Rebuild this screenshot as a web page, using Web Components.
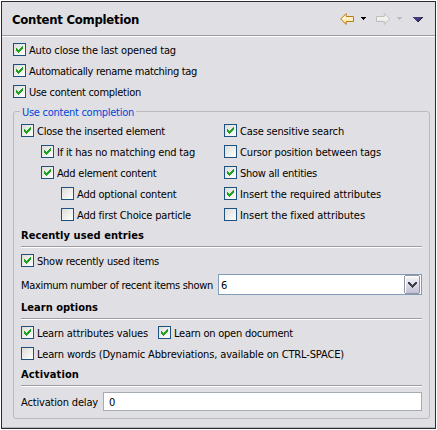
<!DOCTYPE html>
<html lang="en"><head><meta charset="utf-8"><title>Content Completion</title>
<style>
html,body{margin:0;height:100%;background:#fff}
body{font:11px/13px "DejaVu Sans Condensed","DejaVu Sans",sans-serif;font-stretch:condensed;color:#000;overflow:hidden}
</style></head><body>
<pref-page></pref-page>
<script>
const define=(name,html,init)=>{
  const t=document.createElement('template');t.innerHTML=html;
  customElements.define(name,class extends HTMLElement{
    connectedCallback(){
      if(this.shadowRoot)return;
      this.attachShadow({mode:'open'}).append(t.content.cloneNode(true));
      if(init)init(this,this.shadowRoot);
    }
  });
};

// Single-line label whose tracking is adjusted so it spans a given width.
define('fit-label',`<style>:host{display:block;white-space:pre;flex:none}span{display:inline-block}</style><span><slot></slot></span>`,(el,r)=>{
  const s=r.querySelector('span'),w=+el.getAttribute('w');
  const n=el.textContent.length,m=s.getBoundingClientRect().width;
  if(w&&m)s.style.letterSpacing=((w-m)/n)+'px';
  el.style.width=w+'px';
});

define('check-item',`<style>
:host{display:flex;height:13px;align-items:flex-start;gap:3px;flex:none}
i{box-sizing:border-box;width:13px;height:13px;flex:none;border:1px solid #1c5180;background:linear-gradient(135deg,#dcdcd7,#fff)}
svg{display:none;width:11px;height:11px}
:host([checked]) svg{display:block}
fit-label{margin-top:1px}
</style><i><svg viewBox="0 0 11 11" shape-rendering="crispEdges"><path fill="#21a121" d="M2 4h1v1h1v1h1v-1h1v-1h1v-1h1v-1h1v3h-1v1h-1v1h-1v1h-1v1h-1v-1h-1v-1h-1z"/></svg></i><fit-label></fit-label>`,(el,r)=>{
  const f=document.createElement('fit-label');f.setAttribute('w',el.getAttribute('w'));
  f.textContent=el.textContent;r.querySelector('fit-label').replaceWith(f);
});

define('section-head',`<style>
:host{display:block;height:19px;border-bottom:1px solid #fff;box-sizing:border-box;font-weight:bold}
div{height:17px;border-bottom:1px solid #9d9da1}
</style><div><slot></slot></div>`);

define('combo-box',`<style>
:host{display:flex;box-sizing:border-box;height:21px;flex:1;border:1px solid #7f9db9;background:#fff;padding:0 0 0 2px;line-height:22px}
span{flex:1;height:19px}
svg{width:17px;height:19px}
</style><span><slot></slot></span><svg viewBox="0 0 17 19" shape-rendering="crispEdges"><defs><linearGradient id="g" x2="0" y2="1"><stop stop-color="#f4f4f8"/><stop offset="1" stop-color="#c0c1d5"/></linearGradient></defs><path fill="#94949f" d="M1 0h14v1h1v17h-1v1H1v-1H0V1h1z"/><path fill="#fff" d="M1 1h14v17H1z"/><path fill="url(#g)" d="M2 2h13v16H2z"/><path fill="#3d3d43" d="M4 7h2v1h1v1h1v1h1v-1h1v-1h1v-1h2v2h-1v1h-1v1h-1v1h-1v1h-1v-1h-1v-1h-1v-1h-1v-1h-1z"/></svg>`);

define('text-field',`<style>:host{display:block;box-sizing:border-box;height:19px;flex:1;border:1px solid #a5acb2;background:#fff;padding-left:5px;line-height:20px}</style><slot></slot>`);

define('nav-tools',`<style>:host{display:block;width:84px;height:13px;margin-top:1px}svg{display:block}</style>
<svg width="84" height="13" viewBox="0 0 84 13"><defs><linearGradient id="a" x2="0" y2="1"><stop stop-color="#fffef0"/><stop offset="1" stop-color="#ffe08a"/></linearGradient><linearGradient id="b" x2="0" y2="1"><stop stop-color="#fcfcfa"/><stop offset="1" stop-color="#e4e4dc"/></linearGradient></defs>
<path d="M.7 6 6.2 .6V3.5h7.3v5H6.2v2.9z" fill="url(#a)" stroke="#b87a16"/>
<path d="M49.8 6 44.3 .6V3.5h-7.8v5h7.8v2.9z" fill="url(#b)" stroke="#bdbdbb"/>
<g shape-rendering="crispEdges"><path d="M21 4h5v1h-1v1h-1v1h-1v-1h-1v-1h-1z"/><path fill="#bcbcc0" d="M57 4h5v1h-1v1h-1v1h-1v-1h-1v-1h-1z"/>
<path fill="#423d7a" d="M73 4h10v1h-1v1h-1v1h-1v1h-1v1h-2v-1h-1v-1h-1v-1h-1v-1h-1z"/><path fill="#15132b" d="M82 4h1v1h-1v1h-1v1h-1v1h-1v1h-1v-1h1v-1h1v-1h1v-1h1z"/></g></svg>`);

define('group-box',`<style>
:host{display:block;box-sizing:border-box;margin:13px 5px 0 11px;height:308px;position:relative}
fieldset{margin:0;box-sizing:border-box;height:308px;border:1px solid #bfb8bf;border-radius:3px;padding:12px 7px 0}
fit-label{position:absolute;left:7px;top:-5px;padding:0 2px;background:#e0dfe3;color:#0046d5}
</style><fieldset><slot></slot></fieldset><fit-label w="112">Use content completion</fit-label>`);

define('pref-page',`<style>
:host{display:block;padding:1px}
main{box-sizing:border-box;width:435px;height:428px;border:1px solid #2b2b30;background:#e0dfe3;display:flex;flex-direction:column;box-shadow:inset 0 -1px #b8b8bc}
header{display:flex;justify-content:space-between;box-sizing:border-box;height:34px;border-bottom:1px solid #9d9da1;padding:10px 11px 0 10px;font-weight:bold;font-size:13px;line-height:16px}
.rule{height:1px;background:#fff}
.top{padding:6px 0 0 11px}
.top,.col{display:flex;flex-direction:column;gap:8px}
.cols{display:grid;grid-template-columns:203px 1fr}
.i1{margin-left:20px}.i2{margin-left:40px}
.row{display:flex}
.after8{margin-top:8px}
.after6{margin-top:6px}
</style><main>
<header><fit-label w="127">Content Completion</fit-label><nav-tools></nav-tools></header><div class="rule"></div>
<div class="top"><check-item checked w="147">Auto close the last opened tag</check-item><check-item checked w="168">Automatically rename matching tag</check-item><check-item checked w="112">Use content completion</check-item></div>
<group-box>
<div class="cols"><div class="col"><check-item checked w="128">Close the inserted element</check-item><check-item class="i1" checked w="138">If it has no matching end tag</check-item><check-item class="i1" checked w="99.5">Add element content</check-item><check-item class="i2" w="99.5">Add optional content</check-item><check-item class="i2" w="114">Add first Choice particle</check-item></div>
<div class="col"><check-item checked w="104">Case sensitive search</check-item><check-item w="141">Cursor position between tags</check-item><check-item checked w="77">Show all entities</check-item><check-item checked w="141">Insert the required attributes</check-item><check-item w="125">Insert the fixed attributes</check-item></div></div>
<section-head class="after8"><fit-label w="123">Recently used entries</fit-label></section-head>
<check-item class="after6" checked w="122">Show recently used items</check-item>
<div class="row" style="margin-top:7px;gap:5px;height:21px;line-height:23px"><fit-label w="192">Maximum number of recent items shown</fit-label><combo-box>6</combo-box></div>
<section-head class="after6"><fit-label w="77">Learn options</fit-label></section-head>
<div class="row after6" style="gap:10px"><check-item checked w="111">Learn attributes values</check-item><check-item checked w="119">Learn on open document</check-item></div>
<check-item class="after8" w="307">Learn words (Dynamic Abbreviations, available on CTRL-SPACE)</check-item>
<section-head class="after8"><fit-label w="58">Activation</fit-label></section-head>
<div class="row" style="margin-top:5px;gap:5px;height:19px;line-height:22px"><fit-label w="77">Activation delay</fit-label><text-field>0</text-field></div>
</group-box></main>`);
</script></body></html>
